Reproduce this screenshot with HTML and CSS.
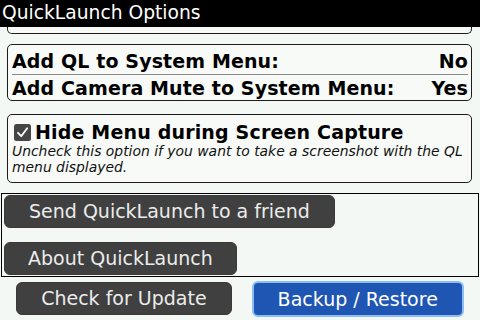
FILE: index.html
```html
<!DOCTYPE html>
<html>
<head>
<meta charset="utf-8">
<link rel="stylesheet" href="styles.css">
</head>
<body>
<div class="screen">
  <header class="titlebar">QuickLaunch Options</header>
  <main class="options">
    <div class="box box-clipped"></div>
    <div class="box box-rows">
      <div class="row row-first"><span>Add QL to System Menu:</span><span>No</span></div>
      <div class="row row-last"><span>Add Camera Mute to System Menu:</span><span>Yes</span></div>
    </div>
    <div class="box box-check">
      <div class="check-line">
        <svg class="checkbox" width="17" height="17" viewBox="0 0 17 17"><rect x="0" y="0" width="17" height="17" rx="2.5" fill="#454545"/><path d="M4 8.8 L7.2 12.2 L13.2 4.2" fill="none" stroke="#ffffff" stroke-width="1.8" stroke-linecap="round" stroke-linejoin="round"/></svg>
        <span class="check-label">Hide Menu during Screen Capture</span>
      </div>
      <p class="hint">Uncheck this option if you want to take a screenshot with the QL menu displayed.</p>
    </div>
    <div class="panel">
      <button class="btn btn-send">Send QuickLaunch to a friend</button>
      <button class="btn btn-about">About QuickLaunch</button>
    </div>
    <div class="actions">
      <button class="btn">Check for Update</button>
      <button class="btn btn-primary">Backup / Restore</button>
    </div>
  </main>
</div>
</body>
</html>
```

FILE: styles.css
```css
html, body {
  margin: 0;
  padding: 0;
}
body {
  width: 480px;
  height: 320px;
  overflow: hidden;
  background: #f4f8f4;
  font-family: "DejaVu Sans", "Liberation Sans", sans-serif;
  color: #000;
}
.screen {
  display: flex;
  flex-direction: column;
  height: 320px;
}
.titlebar {
  height: 27px;
  box-sizing: border-box;
  background: #000;
  color: #fff;
  font-size: 18.7px;
  line-height: 25px;
  padding: 0 0 2px 2px;
}
.options {
  display: flex;
  flex-direction: column;
}
.box {
  margin: 0 8px 0 7px;
  border: 1px solid #1c1c1c;
  border-radius: 5px;
  background: #f7faf7;
}
.box-clipped {
  height: 6px;
  border-top: 0;
  border-radius: 0 0 5px 5px;
}
.box-rows {
  margin-top: 10px;
  padding-top: 3px;
}
.row {
  display: flex;
  justify-content: space-between;
  margin: 0 3px 0 4px;
  font-size: 19px;
  font-weight: bold;
  letter-spacing: 0.12px;
}
.row-first {
  height: 26px;
  line-height: 26px;
  border-bottom: 1px solid #8a8a8a;
}
.row-last {
  height: 25px;
  line-height: 26px;
}
.box-check {
  margin-top: 13px;
  padding: 6px 4px 7px 4px;
}
.check-line {
  display: flex;
  align-items: center;
  height: 22px;
  line-height: 22px;
}
.checkbox {
  margin: 1px 4px 0 2px;
  flex: none;
}
.check-label {
  font-size: 19px;
  font-weight: bold;
  letter-spacing: 0.17px;
}
.hint {
  margin: 0;
  font-size: 13.9px;
  line-height: 16px;
  font-style: italic;
  color: #111;
}
.panel {
  margin: 10px 1px 0 1px;
  border: 1px solid #000;
  padding: 1px 2px 1px 2px;
  display: flex;
  flex-direction: column;
  align-items: flex-start;
  gap: 14px;
}
.btn {
  font-family: "DejaVu Sans", "Liberation Sans", sans-serif;
  font-size: 19px;
  height: 33px;
  line-height: 29px;
  padding: 0 24px;
  border: 1px solid #3a3a3a;
  border-radius: 6px;
  background: #404040;
  color: #ececec;
  white-space: nowrap;
}
.btn-about {
  padding: 0 23px;
}
.actions {
  display: flex;
  justify-content: center;
  gap: 20px;
  margin-top: 5px;
}
.btn-primary {
  background: #1f56b4;
  color: #fff;
  border: 2px solid #8dbdf2;
  height: 36px;
  margin-top: -1px;
  padding: 0 24px;
}
```
